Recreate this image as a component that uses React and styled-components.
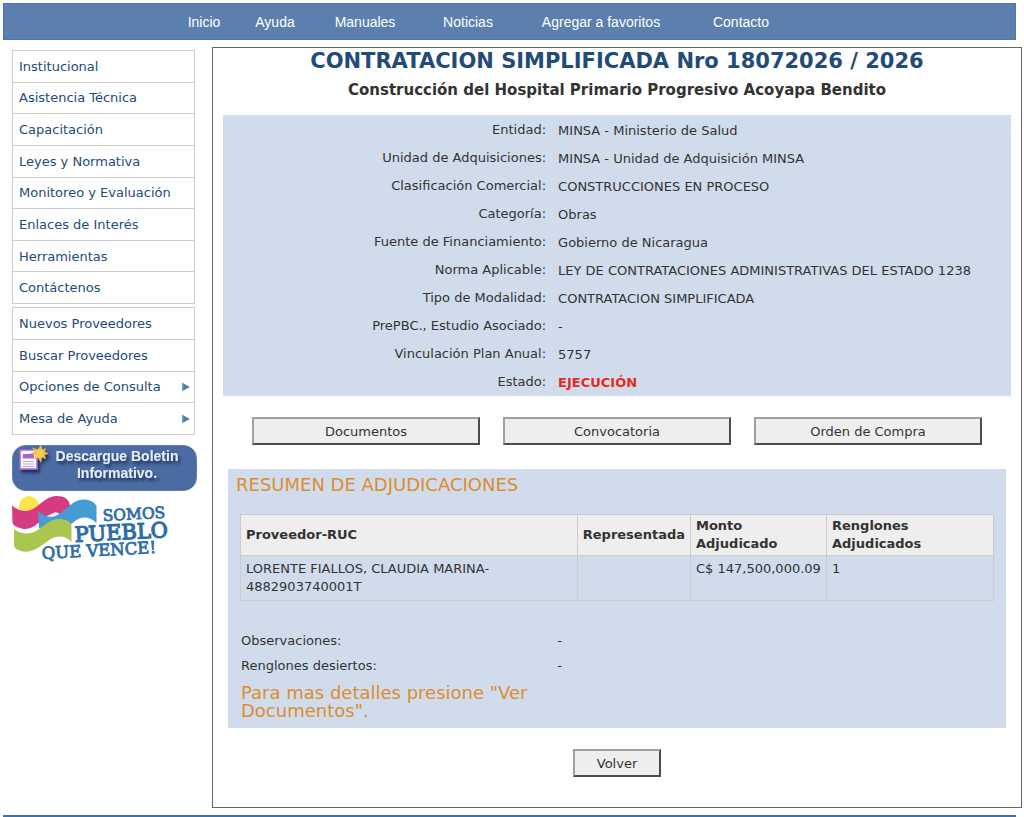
import React from 'react';
import styled, { createGlobalStyle } from 'styled-components';

const GlobalStyle = createGlobalStyle`
  * {
    box-sizing: border-box;
  }

  body {
    margin: 0;
    background-color: #ffffff;
    color: #333333;
    font-family: Verdana, 'DejaVu Sans', sans-serif;
    font-size: 13px;
  }
`;

const Page = styled.div`
  padding: 3px 2px 0 3px;
`;

const TopBar = styled.nav`
  display: flex;
  align-items: center;
  height: 37px;
  margin-right: 6px;
  padding-left: 165px;
  background-color: #5b80ad;
  border: 1px solid #4f76a6;
`;

const TopLink = styled.a`
  width: ${props => props.$width}px;
  color: white;
  font-family: Arial, 'Liberation Sans', sans-serif;
  font-size: 14px;
  text-align: center;
  text-decoration: none;
`;

const Columns = styled.div`
  display: flex;
  align-items: flex-start;
  gap: 17px;
  padding: 7px 0 7px 9px;
`;

const Sidebar = styled.aside`
  flex: none;
  width: 183px;
  padding-top: 3px;
`;

const Menu = styled.ul`
  display: flex;
  flex-direction: column;
  min-height: ${props => props.$minHeight}px;
  margin: 0 0 3px;
  padding: 0;
  list-style: none;
  border: 1px solid #cccccc;
`;

const MenuItem = styled.li`
  display: flex;
  flex: 1;

  & + & {
    border-top: 1px solid #cccccc;
  }
`;

const MenuLink = styled.a`
  display: flex;
  flex: 1;
  align-items: center;
  justify-content: space-between;
  padding: 0 4px 0 6px;
  color: #234b7a;
  text-decoration: none;
`;

const NewsletterLink = styled.a`
  display: block;
  margin-top: 10px;
`;

const Slogan = styled.div`
  margin-top: 4px;
`;

const Drawing = styled.svg`
  display: block;
  flex: none;
`;

const Main = styled.main`
  flex: 1;
  min-width: 0;
  padding: 0 10px 6px;
  border: 1px solid #666666;
`;

const Title = styled.h1`
  margin: 0;
  color: #234b7a;
  font-size: 21px;
  line-height: 26px;
  text-align: center;
`;

const Subtitle = styled.h2`
  margin: 4px 0 12px;
  font-size: 15px;
  line-height: 25px;
  text-align: center;
`;

const Details = styled.dl`
  margin: 0;
  padding-top: 1px;
  background-color: #d0dceb;
`;

const DetailRow = styled.div`
  display: flex;
  line-height: 28px;
`;

const DetailLabel = styled.dt`
  width: 41%;
  text-align: right;
`;

const DetailValue = styled.dd`
  flex: 1;
  margin: 0;
  padding: 1px 0 0 12px;
  line-height: 27px;
  color: ${props => (props.$alert ? '#e8291c' : 'inherit')};
  font-weight: ${props => (props.$alert ? 'bold' : 'normal')};
`;

const Actions = styled.div`
  display: flex;
  justify-content: center;
  gap: 23px;
  padding: 21px 29px 24px;
`;

const Button = styled.button`
  flex: ${props => (props.$small ? '0 0 88px' : '1')};
  height: 28px;
  padding: 0;
  background-color: #eeeeee;
  border: 2px solid;
  border-color: #a0a0a0 #4c4c4c #4c4c4c #a0a0a0;
  color: #333333;
  font-family: inherit;
  font-size: 13px;
`;

const Summary = styled.section`
  margin: 0 5px;
  padding: 6px 12px 8px;
  background-color: #d0dceb;
`;

const SummaryTitle = styled.h3`
  margin: 0 0 20px -4px;
  color: #dd8d2f;
  font-size: 18px;
  font-weight: normal;
  line-height: 19px;
`;

const Table = styled.table`
  width: 100%;
  border-collapse: collapse;
  line-height: 18px;
`;

const Th = styled.th`
  width: ${props => props.$width};
  padding: 2px 5px;
  background-color: #eeeeee;
  border: 1px solid #cccccc;
  text-align: left;
`;

const Td = styled.td`
  padding: 4px 5px;
  border: 1px solid #cccccc;
  vertical-align: top;
`;

const Notes = styled.dl`
  margin: 27px 0 0;
  padding-left: 1px;
`;

const NoteRow = styled.div`
  display: flex;
  line-height: 25px;
`;

const NoteLabel = styled.dt`
  width: 42%;
`;

const NoteValue = styled.dd`
  margin: 0;
`;

const Hint = styled.p`
  width: 42%;
  margin: 6px 0 0;
  padding-left: 1px;
  color: #dd8d2f;
  font-size: 18px;
  line-height: 18px;
`;

const Footer = styled.footer`
  height: 2px;
  margin-right: 6px;
  background-color: #3d73a8;
`;

const topLinks = [
  { label: 'Inicio', width: 70 },
  { label: 'Ayuda', width: 72 },
  { label: 'Manuales', width: 108 },
  { label: 'Noticias', width: 98 },
  { label: 'Agregar a favoritos', width: 168 },
  { label: 'Contacto', width: 112 },
];

const mainMenu = [
  { label: 'Institucional' },
  { label: 'Asistencia Técnica' },
  { label: 'Capacitación' },
  { label: 'Leyes y Normativa' },
  { label: 'Monitoreo y Evaluación' },
  { label: 'Enlaces de Interés' },
  { label: 'Herramientas' },
  { label: 'Contáctenos' },
];

const supplierMenu = [
  { label: 'Nuevos Proveedores' },
  { label: 'Buscar Proveedores' },
  { label: 'Opciones de Consulta', submenu: true },
  { label: 'Mesa de Ayuda', submenu: true },
];

const details = [
  { label: 'Entidad', value: 'MINSA - Ministerio de Salud' },
  { label: 'Unidad de Adquisiciones', value: 'MINSA - Unidad de Adquisición MINSA' },
  { label: 'Clasificación Comercial', value: 'CONSTRUCCIONES EN PROCESO' },
  { label: 'Categoría', value: 'Obras' },
  { label: 'Fuente de Financiamiento', value: 'Gobierno de Nicaragua' },
  { label: 'Norma Aplicable', value: 'LEY DE CONTRATACIONES ADMINISTRATIVAS DEL ESTADO 1238' },
  { label: 'Tipo de Modalidad', value: 'CONTRATACION SIMPLIFICADA' },
  { label: 'PrePBC., Estudio Asociado', value: '-' },
  { label: 'Vinculación Plan Anual', value: '5757' },
  { label: 'Estado', value: 'EJECUCIÓN', alert: true },
];

const awards = [
  {
    proveedor: 'LORENTE FIALLOS, CLAUDIA MARINA-4882903740001T',
    representada: '',
    monto: 'C$ 147,500,000.09',
    renglones: '1',
  },
];

const SubmenuArrow = () => (
  <Drawing width="9" height="10" viewBox="0 0 9 10" aria-hidden="true">
    <path d="M1 0.5 L9 5 L1 9.5 Z" fill="#6f9fbc" />
    <path d="M2.5 2 L8 5 L2.5 8 Z" fill="#4f7f9f" />
  </Drawing>
);

const SideMenu = ({ items, minHeight }) => (
  <Menu $minHeight={minHeight}>
    {items.map(item => (
      <MenuItem key={item.label}>
        <MenuLink href="#">
          {item.label}
          {item.submenu && <SubmenuArrow />}
        </MenuLink>
      </MenuItem>
    ))}
  </Menu>
);

const NewsletterBadge = () => (
  <Drawing width="185" height="47" viewBox="0 0 185 47">
    <defs>
      <filter id="shadow" x="-20%" y="-20%" width="150%" height="160%">
        <feDropShadow dx="2" dy="3" stdDeviation="1.5" floodColor="#0d2247" floodOpacity="0.8" />
      </filter>
    </defs>
    <rect x="0.5" y="0.5" width="184" height="45" rx="13" fill="#4b6ca3" stroke="#5d7db0" />
    <g filter="url(#shadow)">
      <rect x="8" y="5" width="17" height="19" fill="#fbf8ff" stroke="#a56cc4" strokeWidth="1.6" />
      <rect x="11" y="9" width="11" height="4.5" fill="#a763cf" />
      <path d="M11 16.5 H22 M11 19 H22 M11 21.5 H22" stroke="#b5afbd" strokeWidth="1" />
      <path
        d="M29 0 L30.6 4.5 L34 3 L32.8 6.8 L36.5 8.5 L32.6 10.2 L34 14 L30 12.6 L29 17.5 L26 13 L22 14.5 L23.6 10 L17.5 8.5 L22.8 6.7 L20 2.5 L25.6 4.4 Z"
        fill="#e9b942"
      />
      <circle cx="27.5" cy="8.5" r="4" fill="#f4cd5c" />
    </g>
    <g
      filter="url(#shadow)"
      fill="#e6edf8"
      fontFamily="Arial, 'Liberation Sans', sans-serif"
      fontSize="14"
      fontWeight="bold"
      textAnchor="middle"
    >
      <text x="105" y="16">Descargue Boletin</text>
      <text x="105" y="33">Informativo.</text>
    </g>
  </Drawing>
);

const SloganLogo = () => (
  <Drawing width="160" height="70" viewBox="0 0 160 70">
    <circle cx="17" cy="10" r="10" fill="#fbe54f" />
    <path
      d="M0 9.5 C8 16 16 17 24 11 C32 5 36 0 45 0 C52 0 57 3 58 9 V27 H26 C20 33 14 34 8 32 C4 31 1 29 0.5 27 Z"
      fill="#d63a80"
    />
    <path d="M35 20 L44 16 C48 19 53 19 56 17 L58 40 H30 Z" fill="#ffffff" />
    <path
      d="M26 15 C34 22 42 23 50 16 C58 9 64 3 73 3.5 C79 4 83 7 84.5 10 V27 C77 20 69 20 62 26 C54 32 44 38 34 34 L27 32 Z"
      fill="#459bd2"
    />
    <path
      d="M2 33 C10 39 19 39 27 33 C35 27 40 23 47 23 C53 23 58 25 59.5 29 V46 C53 39 44 39 36 45 C28 51 18 58 9 55 C5 54 3 52 2 50 Z"
      fill="#a9c650"
    />
    <g
      fill="#2f6da8"
      stroke="#2f6da8"
      strokeWidth="0.8"
      fontFamily="'DejaVu Serif', 'Liberation Serif', serif"
    >
      <text x="91" y="25" fontSize="15.5" transform="rotate(-3 91 25)">SOMOS</text>
      <text x="63" y="46" fontSize="21" transform="rotate(-3 63 46)" strokeWidth="1.2">PUEBLO</text>
      <text x="30" y="63" fontSize="16.5" transform="rotate(-3 30 63)">QUE VENCE!</text>
    </g>
  </Drawing>
);

const App = () => {
  return (
    <>
      <GlobalStyle />
      <Page>
        <TopBar>
          {topLinks.map(link => (
            <TopLink key={link.label} href="#" $width={link.width}>{link.label}</TopLink>
          ))}
        </TopBar>

        <Columns>
          <Sidebar>
            <SideMenu items={mainMenu} minHeight={254} />
            <SideMenu items={supplierMenu} minHeight={128} />
            <NewsletterLink href="#">
              <NewsletterBadge />
            </NewsletterLink>
            <Slogan>
              <SloganLogo />
            </Slogan>
          </Sidebar>

          <Main>
            <Title>CONTRATACION SIMPLIFICADA Nro 18072026 / 2026</Title>
            <Subtitle>Construcción del Hospital Primario Progresivo Acoyapa Bendito</Subtitle>

            <Details>
              {details.map(row => (
                <DetailRow key={row.label}>
                  <DetailLabel>{row.label}:</DetailLabel>
                  <DetailValue $alert={row.alert}>{row.value}</DetailValue>
                </DetailRow>
              ))}
            </Details>

            <Actions>
              <Button type="button">Documentos</Button>
              <Button type="button">Convocatoria</Button>
              <Button type="button">Orden de Compra</Button>
            </Actions>

            <Summary>
              <SummaryTitle>RESUMEN DE ADJUDICACIONES</SummaryTitle>
              <Table>
                <thead>
                  <tr>
                    <Th>Proveedor-RUC</Th>
                    <Th $width="109px">Representada</Th>
                    <Th $width="136px">Monto Adjudicado</Th>
                    <Th $width="167px">Renglones Adjudicados</Th>
                  </tr>
                </thead>
                <tbody>
                  {awards.map(award => (
                    <tr key={award.proveedor}>
                      <Td>{award.proveedor}</Td>
                      <Td>{award.representada}</Td>
                      <Td>{award.monto}</Td>
                      <Td>{award.renglones}</Td>
                    </tr>
                  ))}
                </tbody>
              </Table>

              <Notes>
                <NoteRow>
                  <NoteLabel>Observaciones:</NoteLabel>
                  <NoteValue>-</NoteValue>
                </NoteRow>
                <NoteRow>
                  <NoteLabel>Renglones desiertos:</NoteLabel>
                  <NoteValue>-</NoteValue>
                </NoteRow>
              </Notes>
              <Hint>Para mas detalles presione "Ver Documentos".</Hint>
            </Summary>

            <Actions>
              <Button type="button" $small>Volver</Button>
            </Actions>
          </Main>
        </Columns>

        <Footer />
      </Page>
    </>
  );
};

export default App;
